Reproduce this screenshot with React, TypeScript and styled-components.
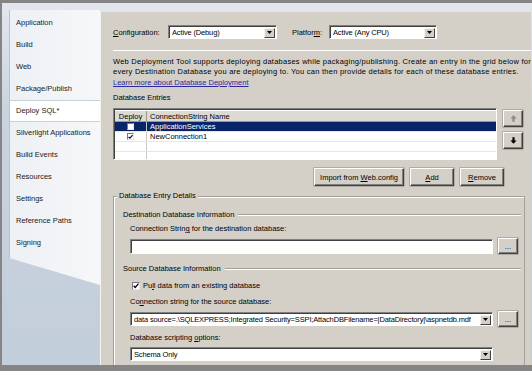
import React from 'react';
import styled, { createGlobalStyle, css } from 'styled-components';

const GlobalStyle = createGlobalStyle`
  html, body { margin: 0; padding: 0; background: #fff; }
  body {
    font-family: "Liberation Sans", Arial, sans-serif;
    font-size: 7.5px;
    color: #000;
  }
`;

const Frame = styled.div`
  width: 532px;
  height: 371px;
  box-sizing: border-box;
  background: #858585;
  padding: 3px 4px 6px 2px;
  display: flex;
`;

const Window = styled.div`
  flex: 1;
  display: flex;
  background: linear-gradient(#e3e7ed, #c9d3df 30%, #c3cedb);
`;

const Sidebar = styled.div`
  width: 98px;
  padding: 7px 0 0 7px;
  box-sizing: border-box;
`;

const TabPanel = styled.div`
  height: 275px;
  box-sizing: border-box;
  padding-top: 2px;
  background: linear-gradient(90deg, #edf0f4, #f6f7f9);
  border-left: 1px solid #b8c2ce;
  clip-path: polygon(0 0, 100% 0, 100% 100%, 0 calc(100% - 27px));
`;

const Tab = styled.div<{ $active?: boolean }>`
  height: 22px;
  line-height: 22px;
  padding-left: 6px;
  box-sizing: border-box;
  color: #1b1b1b;
  white-space: nowrap;
  ${(p) =>
    p.$active &&
    css`
      background: #fff;
      border-top: 1px solid #c9d0d9;
      border-bottom: 1px solid #c9d0d9;
      line-height: 20px;
    `}
`;

const Content = styled.div`
  flex: 1;
  margin: 9px 3px 0 0;
  background: #d4d0c8;
  border-left: 1px solid #f4f3ef;
  overflow: hidden;
  padding: 13px 0 0 12px;
  box-sizing: border-box;
  display: flex;
  flex-direction: column;
`;

const Key = styled.span`
  text-decoration: underline;
`;

const ConfigRow = styled.div`
  display: flex;
  align-items: center;
  height: 14px;
`;

const Label = styled.span<{ $w?: number; $gap?: number }>`
  width: ${(p) => (p.$w ? `${p.$w}px` : 'auto')};
  margin-left: ${(p) => p.$gap ?? 0}px;
  white-space: nowrap;
`;

const Combo = styled.div<{ $w: number; $h?: number }>`
  width: ${(p) => p.$w}px;
  height: ${(p) => p.$h ?? 14}px;
  flex: none;
  box-sizing: border-box;
  border: 1px solid;
  border-color: #808080 #fff #fff #808080;
  box-shadow: inset 1px 1px #404040;
  background: #fff;
  display: flex;
  align-items: center;
  padding: 1px 1px 0 3px;
  overflow: hidden;
`;

const ComboText = styled.span`
  flex: 1;
  white-space: nowrap;
  overflow: hidden;
  letter-spacing: -0.15px;
`;

const ArrowButton = styled.span`
  width: 11px;
  height: 10px;
  flex: none;
  box-sizing: border-box;
  background: #d4d0c8;
  border: 1px solid;
  border-color: #f4f3ef #404040 #404040 #f4f3ef;
  display: flex;
  align-items: center;
  justify-content: center;
`;

const Separator = styled.div`
  height: 1px;
  margin-top: 11px;
  background: #a3a09a;
  border-bottom: 1px solid #fff;
`;

const Para = styled.p`
  margin: 6px 0 0;
  line-height: 10px;
  white-space: nowrap;
  letter-spacing: 0.25px;
`;

const Link = styled.a`
  display: block;
  margin-top: 1px;
  line-height: 10px;
  color: #2a2aa0;
  text-decoration: underline;
`;

const SectionLabel = styled.div`
  margin-top: 5px;
  line-height: 10px;
`;

const GridRow = styled.div`
  display: flex;
  gap: 6px;
  margin-top: 5px;
`;

const Grid = styled.div`
  width: 384px;
  height: 52px;
  box-sizing: border-box;
  border: 1px solid;
  border-color: #808080 #fff #fff #808080;
  box-shadow: inset 1px 1px #404040;
  background: #fff;
  padding: 1px 0 0 1px;
  overflow: hidden;
`;

const GridLine = styled.div<{ $header?: boolean; $selected?: boolean }>`
  display: flex;
  height: ${(p) => (p.$header ? 12 : 10)}px;
  box-sizing: border-box;
  border-bottom: 1px solid ${(p) => (p.$header ? '#9a978f' : '#e6e6e6')};
  background: ${(p) => (p.$header ? '#dddad3' : p.$selected ? '#0a246a' : '#fff')};
  color: ${(p) => (p.$selected ? '#fff' : '#000')};
  ${(p) =>
    p.$header &&
    css`
      border-top: 1px solid #fff;
    `}
`;

const DeployCell = styled.div<{ $header?: boolean }>`
  width: 32px;
  box-sizing: border-box;
  border-right: 1px solid ${(p) => (p.$header ? '#9a978f' : '#c8c8c8')};
  display: flex;
  align-items: center;
  justify-content: center;
  line-height: 9px;
`;

const NameCell = styled.div`
  flex: 1;
  padding-left: 3px;
  line-height: 9px;
  display: flex;
  align-items: center;
`;

const Box = styled.span<{ $size?: number }>`
  width: ${(p) => p.$size ?? 7}px;
  height: ${(p) => p.$size ?? 7}px;
  flex: none;
  box-sizing: border-box;
  background: #fff;
  border: 1px solid;
  border-color: #7a7a7a #e8e8e8 #e8e8e8 #7a7a7a;
  display: flex;
  align-items: center;
  justify-content: center;
`;

const MoveButtons = styled.div`
  display: flex;
  flex-direction: column;
  gap: 5px;
  padding-top: 2px;
`;

const Button = styled.button<{ $w: number; $h?: number }>`
  width: ${(p) => p.$w}px;
  height: ${(p) => p.$h ?? 18}px;
  flex: none;
  padding: 0;
  box-sizing: border-box;
  font: inherit;
  color: #000;
  background: #d4d0c8;
  border: 1px solid;
  border-color: #fff #404040 #404040 #fff;
  box-shadow: inset -1px -1px #808080, 0 0 0 0.5px #8a8780;
  display: flex;
  align-items: center;
  justify-content: center;
  white-space: nowrap;
`;

const ButtonRow = styled.div`
  display: flex;
  justify-content: flex-end;
  gap: 6px;
  margin-top: 8px;
  padding-right: 27px;
`;

/* group box: the title sits on the top border by a negative margin */
const Group = styled.section`
  flex: none;
  height: 200px;
  margin: 10px 6px 0 0;
  padding: 0 3px 0 9px;
  border: 1px solid #a3a09a;
  box-shadow: inset 1px 1px #fff;
  display: flex;
  flex-direction: column;
`;

const GroupTitle = styled.div`
  align-self: flex-start;
  margin: -6px 0 0 -6px;
  padding: 0 2px;
  line-height: 10px;
  background: #d4d0c8;
  white-space: nowrap;
`;

const SubHeader = styled.div<{ $gap: number }>`
  display: flex;
  align-items: center;
  gap: 4px;
  line-height: 10px;
  margin-top: ${(p) => p.$gap}px;
  white-space: nowrap;
`;

const Rule = styled.span`
  flex: 1;
  height: 1px;
  background: #a3a09a;
  border-bottom: 1px solid #fff;
`;

const Indent = styled.div`
  padding-left: 7px;
  display: flex;
  flex-direction: column;
`;

const FieldLabel = styled.div<{ $gap: number }>`
  margin-top: ${(p) => p.$gap}px;
  line-height: 10px;
  white-space: nowrap;
`;

const FieldRow = styled.div<{ $gap: number }>`
  display: flex;
  align-items: center;
  gap: 5px;
  margin-top: ${(p) => p.$gap}px;
`;

const CheckRow = styled.div`
  display: flex;
  align-items: center;
  gap: 3px;
  margin: 7px 0 0 2px;
  line-height: 10px;
`;

const Tick = ({ color = '#000' }: { color?: string }) => (
  <svg width="6" height="6" viewBox="0 0 7 7">
    <path d="M0.8 3.2 L2.6 5.2 L6.4 0.8" stroke={color} strokeWidth="1.5" fill="none" />
  </svg>
);

const DownTriangle = () => (
  <svg width="5" height="3" viewBox="0 0 5 3">
    <path d="M0 0 H5 L2.5 3 Z" fill="#000" />
  </svg>
);

const Arrow = ({ down, color }: { down?: boolean; color: string }) => (
  <svg width="7" height="7" viewBox="0 0 7 7" style={down ? { transform: 'rotate(180deg)' } : undefined}>
    <path d="M3.5 0.3 L6.6 3.6 H4.6 V6.8 H2.4 V3.6 H0.4 Z" fill={color} />
  </svg>
);

const tabs = [
  'Application',
  'Build',
  'Web',
  'Package/Publish',
  'Deploy SQL*',
  'Silverlight Applications',
  'Build Events',
  'Resources',
  'Settings',
  'Reference Paths',
  'Signing',
];

const entries = [
  { name: 'ApplicationServices', checked: false, selected: true },
  { name: 'NewConnection1', checked: true, selected: false },
  { name: '', checked: null, selected: false },
  { name: '', checked: null, selected: false },
];

export default function App() {
  return (
    <>
      <GlobalStyle />
      <Frame>
        <Window>
          <Sidebar>
            <TabPanel>
              {tabs.map((t) => (
                <Tab key={t} $active={t === 'Deploy SQL*'}>
                  {t}
                </Tab>
              ))}
            </TabPanel>
          </Sidebar>

          <Content>
            <ConfigRow>
              <Label $w={55}>
                <Key>C</Key>onfiguration:
              </Label>
              <Combo $w={109}>
                <ComboText>Active (Debug)</ComboText>
                <ArrowButton>
                  <DownTriangle />
                </ArrowButton>
              </Combo>
              <Label $w={37} $gap={15}>
                Platfor<Key>m</Key>:
              </Label>
              <Combo $w={108}>
                <ComboText>Active (Any CPU)</ComboText>
                <ArrowButton>
                  <DownTriangle />
                </ArrowButton>
              </Combo>
            </ConfigRow>

            <Separator />

            <Para>
              Web Deployment Tool supports deploying databases while packaging/publishing. Create an entry in the grid below for
              <br />
              every Destination Database you are deploying to. You can then provide details for each of these database entries.
            </Para>
            <Link href="#">Learn more about Database Deployment</Link>
            <SectionLabel>Database Entries</SectionLabel>

            <GridRow>
              <Grid>
                <GridLine $header>
                  <DeployCell $header>Deploy</DeployCell>
                  <NameCell>ConnectionString Name</NameCell>
                </GridLine>
                {entries.map((e, i) => (
                  <GridLine key={i} $selected={e.selected}>
                    <DeployCell>
                      {e.checked !== null && <Box>{e.checked && <Tick />}</Box>}
                    </DeployCell>
                    <NameCell>{e.name}</NameCell>
                  </GridLine>
                ))}
              </Grid>
              <MoveButtons>
                <Button $w={20} $h={17}>
                  <Arrow color="#8a8a8a" />
                </Button>
                <Button $w={20} $h={17}>
                  <Arrow down color="#000" />
                </Button>
              </MoveButtons>
            </GridRow>

            <ButtonRow>
              <Button $w={90}>
                Import from&nbsp;<Key>W</Key>eb.config
              </Button>
              <Button $w={44}>
                <Key>A</Key>dd
              </Button>
              <Button $w={44}>
                <Key>R</Key>emove
              </Button>
            </ButtonRow>

            <Group>
              <GroupTitle>Database Entry Details</GroupTitle>
              <SubHeader $gap={9}>
                Destination Database Information
                <Rule />
              </SubHeader>
              <Indent>
                <FieldLabel $gap={4}>
                  Connection Strin<Key>g</Key> for the destination database:
                </FieldLabel>
                <FieldRow $gap={4}>
                  <Combo $w={363} $h={15} />
                  <Button $w={20} $h={16}>
                    ...
                  </Button>
                </FieldRow>
              </Indent>
              <SubHeader $gap={10}>
                Source Database Information
                <Rule />
              </SubHeader>
              <Indent>
                <CheckRow>
                  <Box $size={8}>
                    <Tick />
                  </Box>
                  <span>
                    Pu<Key>l</Key>l data from an existing database
                  </span>
                </CheckRow>
                <FieldLabel $gap={6}>
                  Co<Key>n</Key>nection string for the source database:
                </FieldLabel>
                <FieldRow $gap={4}>
                  <Combo $w={363}>
                    <ComboText>
                      data source=.\SQLEXPRESS;Integrated Security=SSPI;AttachDBFilename=|DataDirectory|\aspnetdb.mdf
                    </ComboText>
                    <ArrowButton>
                      <DownTriangle />
                    </ArrowButton>
                  </Combo>
                  <Button $w={20} $h={16}>
                    ...
                  </Button>
                </FieldRow>
                <FieldLabel $gap={6}>
                  Database scripting <Key>o</Key>ptions:
                </FieldLabel>
                <FieldRow $gap={4}>
                  <Combo $w={363}>
                    <ComboText>Schema Only</ComboText>
                    <ArrowButton>
                      <DownTriangle />
                    </ArrowButton>
                  </Combo>
                </FieldRow>
              </Indent>
            </Group>
          </Content>
        </Window>
      </Frame>
    </>
  );
}
